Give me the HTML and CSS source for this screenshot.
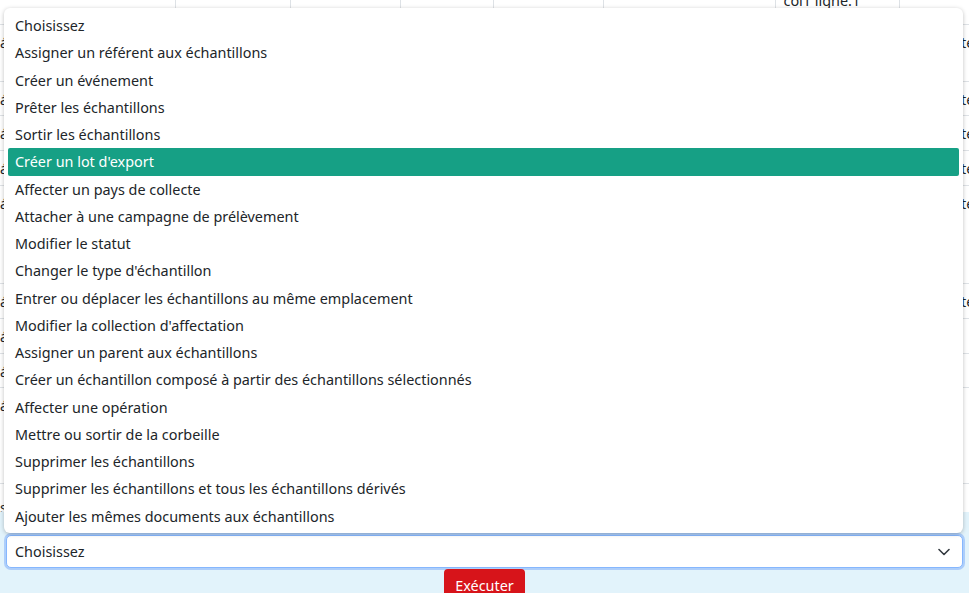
FILE: index.html
```html
<!DOCTYPE html>
<html lang="fr">
<head>
    <meta charset="UTF-8">
    <meta name="viewport" content="width=device-width, initial-scale=1.0">
    <title>Échantillons</title>
    <link rel="stylesheet" href="styles.css">
</head>
<body>
    <div class="page">
        <div class="grid-wrap">
            <table class="samples">
                <colgroup>
                    <col class="c1"><col class="c2"><col class="c3"><col class="c4">
                    <col class="c5"><col class="c6"><col class="c7"><col class="c8">
                </colgroup>
                <thead>
                    <tr class="head">
                        <th></th><th></th><th></th><th></th>
                        <th></th><th></th><th>col1 ligne:1</th><th></th>
                    </tr>
                </thead>
                <tbody>
                    <tr class="h57"><td class="first">á</td><td></td><td></td><td></td><td></td><td></td><td></td><td class="last">test</td></tr>
                    <tr class="h34"><td class="first">á</td><td></td><td></td><td></td><td></td><td></td><td></td><td class="last">test</td></tr>
                    <tr class="h35"><td class="first">á</td><td></td><td></td><td></td><td></td><td></td><td></td><td class="last">test</td></tr>
                    <tr class="h35"><td class="first">á</td><td></td><td></td><td></td><td></td><td></td><td></td><td class="last">test</td></tr>
                    <tr class="h98"><td class="first">á</td><td></td><td></td><td></td><td></td><td></td><td></td><td class="last">test</td></tr>
                    <tr class="h35"><td class="first">á</td><td></td><td></td><td></td><td></td><td></td><td></td><td class="last">test</td></tr>
                    <tr class="h35"><td class="first">á</td><td></td><td></td><td></td><td></td><td></td><td></td><td class="last"></td></tr>
                    <tr class="h34"><td class="first">á</td><td></td><td></td><td></td><td></td><td></td><td></td><td class="last"></td></tr>
                    <tr class="h96"><td class="first">á</td><td></td><td></td><td></td><td></td><td></td><td></td><td class="last"></td></tr>
                    <tr class="h29"><td class="first"><a href="#">s</a></td><td></td><td></td><td></td><td></td><td></td><td></td><td class="last"></td></tr>
                </tbody>
            </table>
        </div>

        <div class="action-bar">
            <div class="fake-select">
                <span>Choisissez</span>
                <svg class="chevron" width="12" height="8" viewBox="0 0 12 8">
                    <polyline points="1,1.5 6,6.5 11,1.5" fill="none" stroke="#343a40" stroke-width="1.6" stroke-linecap="round" stroke-linejoin="round"/>
                </svg>
            </div>
            <button class="btn-run">Exécuter</button>
        </div>

        <ul class="dropdown">
            <li>Choisissez</li>
            <li>Assigner un référent aux échantillons</li>
            <li>Créer un événement</li>
            <li>Prêter les échantillons</li>
            <li>Sortir les échantillons</li>
            <li class="active">Créer un lot d'export</li>
            <li>Affecter un pays de collecte</li>
            <li>Attacher à une campagne de prélèvement</li>
            <li>Modifier le statut</li>
            <li>Changer le type d'échantillon</li>
            <li>Entrer ou déplacer les échantillons au même emplacement</li>
            <li>Modifier la collection d'affectation</li>
            <li>Assigner un parent aux échantillons</li>
            <li>Créer un échantillon composé à partir des échantillons sélectionnés</li>
            <li>Affecter une opération</li>
            <li>Mettre ou sortir de la corbeille</li>
            <li>Supprimer les échantillons</li>
            <li>Supprimer les échantillons et tous les échantillons dérivés</li>
            <li>Ajouter les mêmes documents aux échantillons</li>
        </ul>
    </div>
</body>
</html>
```

FILE: styles.css
```css
body {
    margin: 0;
    font-family: "Noto Sans", "Open Sans", sans-serif;
    font-size: 14.4px;
    color: #212529;
    background-color: #e2f3fb;
}

.page {
    position: relative;
    height: 593px;
    overflow: hidden;
}

.grid-wrap {
    height: 512px;
    overflow: hidden;
    background: white;
}

.samples {
    table-layout: fixed;
    width: 1019px;
    border-collapse: collapse;
    margin-top: -9px;
}

.c1 { width: 175px; }
.c2 { width: 115px; }
.c3 { width: 110px; }
.c4 { width: 93px; }
.c5 { width: 110px; }
.c6 { width: 172px; }
.c7 { width: 124px; }
.c8 { width: 120px; }

.samples th {
    height: 33px;
    padding: 0 8px;
    text-align: left;
    vertical-align: top;
    font-weight: normal;
    line-height: 20px;
    border-right: 1px solid #dee2e6;
    white-space: nowrap;
    overflow: hidden;
}

.samples td {
    padding: 8px 8px 0;
    vertical-align: top;
    line-height: 20px;
    border-top: 1px solid #dee2e6;
}

.samples td.first { padding-left: 0; }
.samples td.last { padding-left: 62px; }

.samples td a { color: #212529; }

.h57 td { height: 48px; }
.h34 td { height: 25px; }
.h35 td { height: 26px; }
.h98 td { height: 89px; }
.h96 td { height: 87px; }
.h29 td { padding-top: 14px; height: 14px; border-bottom: 1px solid #222; }

.action-bar {
    display: flex;
    flex-direction: column;
    align-items: center;
    padding: 23px 6px 0;
}

.fake-select {
    box-sizing: border-box;
    width: 957px;
    height: 33px;
    display: flex;
    align-items: center;
    justify-content: space-between;
    padding: 0 12px 0 8px;
    background: white;
    border: 1px solid #86b7fe;
    border-radius: 5px;
    box-shadow: 0 0 0 2px rgba(120, 170, 250, 0.5);
}

.btn-run {
    margin-top: 1px;
    width: 81px;
    height: 32px;
    padding: 0;
    font-family: inherit;
    font-size: 14.4px;
    color: white;
    background-color: #d7141a;
    border: none;
    border-radius: 4px;
}

.dropdown {
    position: absolute;
    left: 4px;
    top: 8px;
    width: 959px;
    height: 525px;
    box-sizing: border-box;
    margin: 0;
    padding: 4px;
    list-style-type: none;
    background: white;
    border-radius: 6px;
    box-shadow: 0 1px 4px rgba(0, 0, 0, 0.25);
}

.dropdown li {
    height: 27.25px;
    line-height: 27.25px;
    padding-left: 7px;
    white-space: nowrap;
}

.dropdown li.active {
    background-color: #16a085;
    color: white;
    border-radius: 2px;
}
```
